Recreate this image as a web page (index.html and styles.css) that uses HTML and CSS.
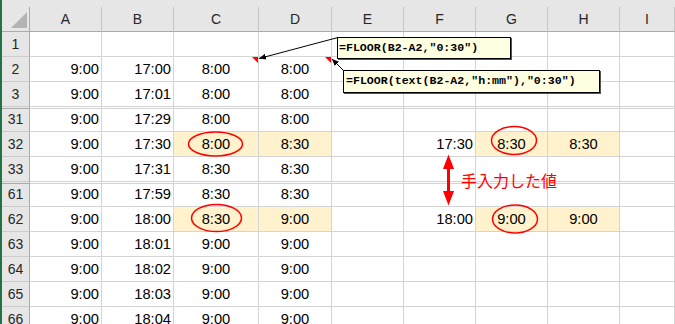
FILE: index.html
```html
<!DOCTYPE html>
<html lang="ja">
<head>
<meta charset="utf-8">
<link rel="stylesheet" href="styles.css">
</head>
<body>
<div class="page">
  <div class="sheet">
    <div class="strip"></div>
    <div class="row head">
      <div class="corner"></div>
      <div class="ch">A</div><div class="ch">B</div><div class="ch">C</div><div class="ch">D</div><div class="ch">E</div><div class="ch">F</div><div class="ch">G</div><div class="ch">H</div><div class="ch">I</div>
    </div>
    <div class="row">
      <div class="rh">1</div><div class="cell"></div><div class="cell"></div><div class="cell"></div><div class="cell"></div><div class="cell"></div><div class="cell"></div><div class="cell"></div><div class="cell"></div><div class="cell"></div>
    </div>
    <div class="row">
      <div class="rh">2</div><div class="cell r">9:00</div><div class="cell r">17:00</div><div class="cell c cmt">8:00</div><div class="cell c cmt">8:00</div><div class="cell"></div><div class="cell"></div><div class="cell"></div><div class="cell"></div><div class="cell"></div>
    </div>
    <div class="row">
      <div class="rh">3</div><div class="cell r">9:00</div><div class="cell r">17:01</div><div class="cell c">8:00</div><div class="cell c">8:00</div><div class="cell"></div><div class="cell"></div><div class="cell"></div><div class="cell"></div><div class="cell"></div>
    </div>
    <div class="row gap">
      <div class="rh">31</div><div class="cell r">9:00</div><div class="cell r">17:29</div><div class="cell c">8:00</div><div class="cell c">8:00</div><div class="cell"></div><div class="cell"></div><div class="cell"></div><div class="cell"></div><div class="cell"></div>
    </div>
    <div class="row">
      <div class="rh">32</div><div class="cell r">9:00</div><div class="cell r">17:30</div><div class="cell c hl">8:00</div><div class="cell c hl">8:30</div><div class="cell"></div><div class="cell r">17:30</div><div class="cell c hl">8:30</div><div class="cell c hl">8:30</div><div class="cell"></div>
    </div>
    <div class="row">
      <div class="rh">33</div><div class="cell r">9:00</div><div class="cell r">17:31</div><div class="cell c">8:30</div><div class="cell c">8:30</div><div class="cell"></div><div class="cell"></div><div class="cell"></div><div class="cell"></div><div class="cell"></div>
    </div>
    <div class="row gap">
      <div class="rh">61</div><div class="cell r">9:00</div><div class="cell r">17:59</div><div class="cell c">8:30</div><div class="cell c">8:30</div><div class="cell"></div><div class="cell"></div><div class="cell"></div><div class="cell"></div><div class="cell"></div>
    </div>
    <div class="row">
      <div class="rh">62</div><div class="cell r">9:00</div><div class="cell r">18:00</div><div class="cell c hl">8:30</div><div class="cell c hl">9:00</div><div class="cell"></div><div class="cell r">18:00</div><div class="cell c hl">9:00</div><div class="cell c hl">9:00</div><div class="cell"></div>
    </div>
    <div class="row">
      <div class="rh">63</div><div class="cell r">9:00</div><div class="cell r">18:01</div><div class="cell c">9:00</div><div class="cell c">9:00</div><div class="cell"></div><div class="cell"></div><div class="cell"></div><div class="cell"></div><div class="cell"></div>
    </div>
    <div class="row">
      <div class="rh">64</div><div class="cell r">9:00</div><div class="cell r">18:02</div><div class="cell c">9:00</div><div class="cell c">9:00</div><div class="cell"></div><div class="cell"></div><div class="cell"></div><div class="cell"></div><div class="cell"></div>
    </div>
    <div class="row">
      <div class="rh">65</div><div class="cell r">9:00</div><div class="cell r">18:03</div><div class="cell c">9:00</div><div class="cell c">9:00</div><div class="cell"></div><div class="cell"></div><div class="cell"></div><div class="cell"></div><div class="cell"></div>
    </div>
    <div class="row">
      <div class="rh">66</div><div class="cell r">9:00</div><div class="cell r">18:04</div><div class="cell c">9:00</div><div class="cell c">9:00</div><div class="cell"></div><div class="cell"></div><div class="cell"></div><div class="cell"></div><div class="cell"></div>
    </div>
  </div>

  <svg class="overlay" width="675" height="324" viewBox="0 0 675 324">
    <defs>
      <marker id="ah" markerWidth="8" markerHeight="8" refX="7" refY="4" orient="auto" markerUnits="userSpaceOnUse">
        <path d="M0,1 L7,4 L0,7 Z" fill="#000"/>
      </marker>
    </defs>
    <line x1="338" y1="37.5" x2="259" y2="58.5" stroke="#000" stroke-width="1" marker-end="url(#ah)"/>
    <line x1="343" y1="70" x2="332" y2="59" stroke="#000" stroke-width="1" marker-end="url(#ah)"/>
    <ellipse cx="215.5" cy="144" rx="27" ry="12" fill="none" stroke="#f00" stroke-width="1.5"/>
    <ellipse cx="216.5" cy="218" rx="25" ry="13.5" fill="none" stroke="#f00" stroke-width="1.5"/>
    <ellipse cx="514" cy="140.5" rx="22.5" ry="14" fill="none" stroke="#f00" stroke-width="1.5"/>
    <ellipse cx="515" cy="219" rx="22.5" ry="14" fill="none" stroke="#f00" stroke-width="1.5"/>
    <rect x="447" y="166" width="3" height="28" fill="#f00"/>
    <polygon points="448.5,154.5 443,169 454,169" fill="#f00"/>
    <polygon points="448.5,205.5 443,191 454,191" fill="#f00"/>
  </svg>

  <div class="note n1">=FLOOR(B2-A2,"0:30")</div>
  <div class="note n2">=FLOOR(text(B2-A2,"h:mm"),"0:30")</div>
  <div class="label">手入力した値</div>
</div>
</body>
</html>
```

FILE: styles.css
```css
* { box-sizing: border-box; margin: 0; padding: 0; }
html, body { width: 675px; height: 324px; overflow: hidden; background: #fff; }
body { font-family: "Liberation Sans", Arial, sans-serif; color: #000; }

.page { position: relative; width: 675px; height: 324px; overflow: hidden; }
.sheet { border-left: 2px solid #217346; height: 324px; }

.strip { height: 7px; background: #e6e6e6; }

.row {
  display: grid;
  grid-template-columns: 28px 72px 72px 85px 73px 72px 72px 72px 72px 1fr;
  height: 25px;
}

.corner {
  position: relative;
  background: #e6e6e6;
  border-right: 1px solid #ababab;
  border-bottom: 1px solid #ababab;
}
.corner::after {
  content: "";
  position: absolute;
  right: 2px;
  bottom: 3px;
  width: 0;
  height: 0;
  border-left: 16px solid transparent;
  border-bottom: 16px solid #b4b4b4;
}

.ch {
  background: #e6e6e6;
  border-right: 1px solid #c6c6c6;
  border-bottom: 1px solid #ababab;
  text-align: center;
  font-size: 14px;
  line-height: 24px;
  color: #262626;
}

.rh {
  background: #e6e6e6;
  border-right: 1px solid #ababab;
  border-bottom: 1px solid #cdcdcd;
  text-align: center;
  font-size: 14px;
  line-height: 24px;
  color: #262626;
}

.cell {
  border-right: 1px solid #d4d4d4;
  border-bottom: 1px solid #d4d4d4;
  font-size: 14.7px;
  line-height: 24px;
  white-space: nowrap;
}
.cell.r { text-align: right; padding-right: 2px; }
.cell.c { text-align: center; }
.cell.hl { background: #fff2cc; }
.cell.cmt { position: relative; }
.cell.cmt::after {
  content: "";
  position: absolute;
  top: 0;
  right: 0;
  width: 0;
  height: 0;
  border-left: 6px solid transparent;
  border-top: 6px solid #f00;
}

.row.gap .cell {
  background-image: linear-gradient(to bottom, transparent 1px, #d4d4d4 1px, #d4d4d4 2px, transparent 2px);
}
.row.gap .rh {
  background-image: linear-gradient(to bottom, transparent 1px, #ababab 1px, #ababab 2px, transparent 2px);
}

.overlay { position: absolute; left: 0; top: 0; pointer-events: none; }

.note {
  position: absolute;
  background: #ffffe1;
  border: 1px solid #000;
  box-shadow: 1px 1px 0 #555;
  font-family: "Liberation Mono", "Courier New", monospace;
  font-weight: bold;
  font-size: 11.6px;
  line-height: 19px;
  padding-left: 1px;
  white-space: nowrap;
  color: #000;
}
.n1 { left: 337px; top: 37px; width: 174px; height: 22px; }
.n2 { left: 343px; top: 70px; width: 257px; height: 23px; padding-left: 2px; line-height: 20px; }

.label {
  position: absolute;
  left: 461px;
  top: 170px;
  font-family: "Noto Sans CJK JP", sans-serif;
  font-size: 16px;
  line-height: 20px;
  color: #f00;
  white-space: nowrap;
}
```
